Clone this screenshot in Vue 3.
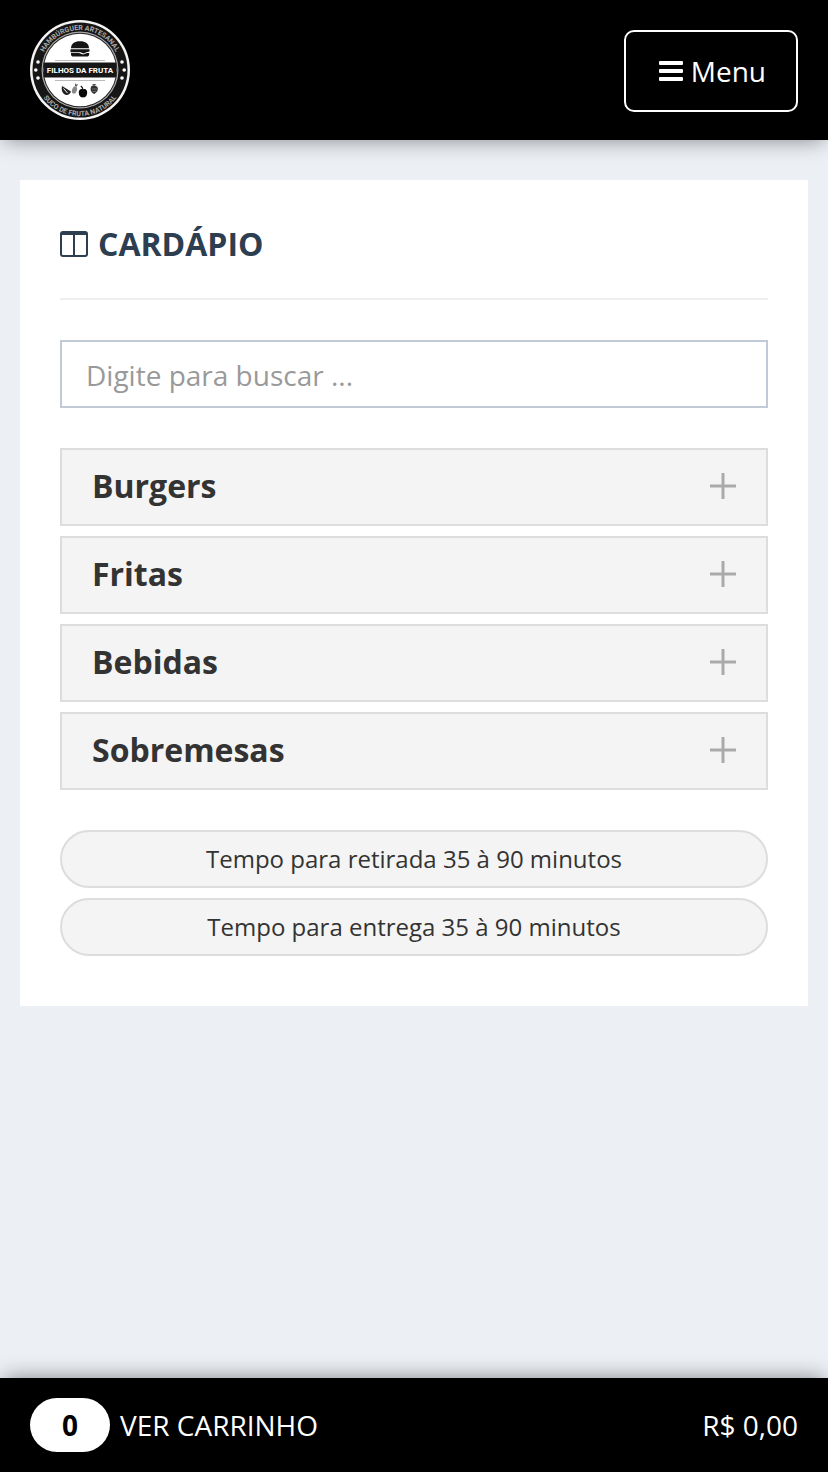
<script setup>
import { ref, computed } from 'vue'

const search = ref('')
const cartCount = ref(0)
const cartTotal = ref('R$ 0,00')

const categories = ['Burgers', 'Fritas', 'Bebidas', 'Sobremesas']

const times = [
  'Tempo para retirada 35 à 90 minutos',
  'Tempo para entrega 35 à 90 minutos'
]

const filtered = computed(() =>
  categories.filter((name) => name.toLowerCase().includes(search.value.trim().toLowerCase()))
)
</script>

<template>
  <div class="page">
    <header class="topbar">
      <a href="#" class="logo-link" aria-label="Filhos da Fruta">
        <svg class="logo" viewBox="0 0 100 100" aria-hidden="true">
          <defs>
            <path id="arc-top" d="M10 50a40 40 0 0 1 80 0" />
            <path id="arc-bottom" d="M4 50a46 46 0 0 0 92 0" />
          </defs>
          <circle cx="50" cy="50" r="50" fill="#f4f4f4" />
          <circle cx="50" cy="50" r="47.5" fill="#161616" />
          <circle cx="50" cy="50" r="38.5" fill="#aaa" />
          <circle cx="50" cy="50" r="37.3" fill="#222" />
          <circle cx="50" cy="50" r="36.3" fill="#fff" />
          <text class="ring-text">
            <textPath href="#arc-top" startOffset="50%" text-anchor="middle">HAMBÚRGUER ARTESANAL</textPath>
          </text>
          <text class="ring-text">
            <textPath href="#arc-bottom" startOffset="50%" text-anchor="middle">SUCO DE FRUTA NATURAL</textPath>
          </text>
          <path d="M14 42.500h72v15H14z" fill="#161616" />
          <g fill="#fff">
            <circle cx="8" cy="42" r="1.8" />
            <circle cx="5.8" cy="50" r="1.8" />
            <circle cx="8" cy="58" r="1.8" />
            <circle cx="92" cy="42" r="1.8" />
            <circle cx="94.2" cy="50" r="1.8" />
            <circle cx="92" cy="58" r="1.8" />
          </g>
          <!-- burger -->
          <g fill="#151515">
            <path d="M41 28.200c0-4.600 3.600-7 9-7s9 2.400 9 7z" />
            <path d="M40.500 29.300h19v2.200l-3 .8-3 1.200-3-1.200h-10z" />
            <path d="M41 33h8l4 1.600 4-1.600h2.200v1.200c0 1.600-1 2.400-2.600 2.400H43.500c-1.600 0-2.500-.8-2.500-2.400z" />
          </g>
          <path d="M25 40.500h50M25 60.500h50" stroke="#bbb" stroke-width="1" />
          <text x="50" y="53" class="logo-name" text-anchor="middle">FILHOS DA FRUTA</text>
          <!-- fruits -->
          <path d="M32 66l9 5.500c-1 3.500-4.500 4.500-7 2.500-2-1.600-2.800-4.500-2-8z" fill="#222" />
          <path d="M33.500 68.500l4 4.500" stroke="#fff" stroke-width="1" />
          <ellipse cx="44.500" cy="70" rx="2.400" ry="3.800" transform="rotate(18 44.500 70)" fill="#888" />
          <path d="M45 66l0-3 1.200 1.800 1.600-1-.8 2.800z" fill="#555" />
          <path d="M53 69.500c-2-1.200-4.200 0-4.200 3 0 3 1.800 5.500 4.200 4.800 2.400.7 4.200-1.800 4.200-4.800s-2.200-4.200-4.200-3z" fill="#080808" />
          <path d="M53 70c-.2-2-1-3.200-2.200-4" fill="none" stroke="#111" stroke-width="1.200" />
          <path d="M61 67c1-2 5-2 6.500.3 1 2.200 0 5.200-3.200 6.700-3-1.200-4.500-4.500-3.300-7z" fill="#333" />
          <path d="M64 66l-2-2h4.500z" fill="#555" />
          <path d="M62 69h5M62.500 71.500h4" stroke="#999" stroke-width=".6" />
        </svg>
      </a>
      <button type="button" class="menu-button">
        <svg class="menu-icon" viewBox="0 0 24 20" aria-hidden="true">
          <rect width="24" height="4" rx="1" />
          <rect y="8" width="24" height="4" rx="1" />
          <rect y="16" width="24" height="4" rx="1" />
        </svg>
        Menu
      </button>
    </header>

    <main class="card">
      <h1 class="title">
        <svg class="title-icon" viewBox="0 0 28 26" aria-hidden="true">
          <path d="M3 0h22a3 3 0 0 1 3 3v20a3 3 0 0 1-3 3H3a3 3 0 0 1-3-3V3a3 3 0 0 1 3-3zM2 4v19a1 1 0 0 0 1 1h10V4zM15 4v20h10a1 1 0 0 0 1-1V4z" fill-rule="evenodd" />
        </svg>
        CARDÁPIO
      </h1>

      <input
        v-model="search"
        type="text"
        class="search"
        placeholder="Digite para buscar ..."
        aria-label="Digite para buscar"
      />

      <div class="categories">
        <button v-for="name in filtered" :key="name" type="button" class="category">
          {{ name }}
          <svg class="plus" viewBox="0 0 26 26" aria-hidden="true">
            <path d="M0 13h26M13 0v26" />
          </svg>
        </button>
      </div>

      <div class="times">
        <p v-for="time in times" :key="time" class="time">{{ time }}</p>
      </div>
    </main>

    <footer class="cart">
      <a href="#" class="cart-link">
        <span class="cart-count">{{ cartCount }}</span>
        VER CARRINHO
      </a>
      <span>{{ cartTotal }}</span>
    </footer>
  </div>
</template>

<style>
body {
  margin: 0;
  background: #ecf0f5;
}
</style>

<style scoped>
.page {
  display: flex;
  flex-direction: column;
  min-height: 100vh;
  font-family: 'Open Sans', sans-serif;
  color: #333;
}
.topbar {
  display: flex;
  align-items: flex-start;
  justify-content: space-between;
  padding: 20px 30px;
  background: #000;
  box-shadow: 0 4px 20px -4px rgba(0, 0, 0, 0.45);
}
.logo {
  display: block;
  width: 100px;
  height: 100px;
}
.ring-text {
  font-family: Roboto, sans-serif;
  font-size: 7px;
  font-weight: 700;
  fill: #aaa;
}
.logo-name {
  font-family: Roboto, sans-serif;
  font-size: 8px;
  font-weight: 700;
  fill: #fff;
}
.menu-button {
  display: flex;
  align-items: center;
  justify-content: center;
  gap: 8px;
  margin-top: 10px;
  padding: 20px 30px 20px 33px;
  border: 2px solid #fff;
  border-radius: 10px;
  background: #000;
  color: #fff;
  font-family: inherit;
  font-size: 28px;
  line-height: 38px;
  cursor: pointer;
}
.menu-icon {
  width: 24px;
  height: 20px;
  fill: #fff;
}
.card {
  margin: 40px 20px;
  padding: 40px 40px 50px;
  background: #fff;
}
.title {
  display: flex;
  align-items: center;
  gap: 10px;
  margin: 0 0 40px;
  padding-bottom: 30px;
  border-bottom: 2px solid #eee;
  color: #2c3e50;
  font-size: 32px;
  font-weight: 700;
  line-height: 48px;
}
.title-icon {
  width: 28px;
  height: 26px;
  fill: #2c3e50;
}
.search {
  display: block;
  box-sizing: border-box;
  width: 100%;
  height: 68px;
  padding: 2px 24px 0;
  border: 2px solid #c2cad8;
  border-radius: 0;
  background: #fff;
  color: #555;
  font-family: inherit;
  font-size: 28px;
}
.search::placeholder {
  color: #999;
  opacity: 1;
}
.categories {
  display: flex;
  flex-direction: column;
  gap: 10px;
  margin-top: 40px;
}
.category {
  display: flex;
  align-items: center;
  justify-content: space-between;
  padding: 14px 30px 16px;
  border: 2px solid #ddd;
  background: #f4f4f4;
  color: #333;
  font-family: inherit;
  font-size: 32px;
  font-weight: 700;
  line-height: 44px;
  text-align: left;
  cursor: pointer;
}
.plus {
  width: 26px;
  height: 26px;
  stroke: #aaa;
  stroke-width: 3;
}
.times {
  display: flex;
  flex-direction: column;
  gap: 10px;
  margin-top: 40px;
}
.time {
  margin: 0;
  padding: 10px 20px;
  border: 2px solid #ddd;
  border-radius: 30px;
  background: #f4f4f4;
  font-size: 24px;
  line-height: 34px;
  text-align: center;
}
.cart {
  display: flex;
  align-items: center;
  justify-content: space-between;
  margin-top: auto;
  padding: 20px 30px;
  background: #000;
  box-shadow: 0 -4px 20px -4px rgba(0, 0, 0, 0.45);
  color: #fff;
  font-size: 28px;
  line-height: 54px;
}
.cart-link {
  display: flex;
  align-items: center;
  gap: 10px;
  color: #fff;
  text-decoration: none;
}
.cart-count {
  min-width: 80px;
  border-radius: 27px;
  background: #fff;
  color: #000;
  font-weight: 700;
  text-align: center;
}
</style>
